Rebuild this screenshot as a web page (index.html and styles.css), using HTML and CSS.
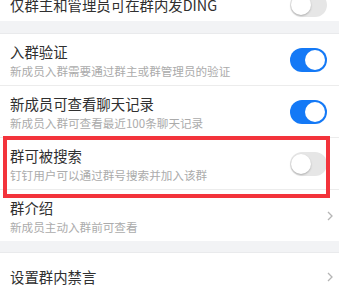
FILE: index.html
```html
<!DOCTYPE html>
<html lang="zh">
<head>
<meta charset="utf-8">
<link rel="stylesheet" href="styles.css">
</head>
<body>
<div class="page">
  <div class="row first">
    <div class="title">仅群主和管理员可在群内发DING</div>
    <span class="toggle off"><span class="knob"></span></span>
  </div>
  <div class="band top"></div>
  <div class="row">
    <div class="text">
      <div class="title">入群验证</div>
      <div class="sub">新成员入群需要通过群主或群管理员的验证</div>
    </div>
    <span class="toggle on"><span class="knob"></span></span>
  </div>
  <div class="divider"></div>
  <div class="row">
    <div class="text">
      <div class="title">新成员可查看聊天记录</div>
      <div class="sub">新成员入群可查看最近100条聊天记录</div>
    </div>
    <span class="toggle on"><span class="knob"></span></span>
  </div>
  <div class="divider"></div>
  <div class="row">
    <div class="text">
      <div class="title">群可被搜索</div>
      <div class="sub">钉钉用户可以通过群号搜索并加入该群</div>
    </div>
    <span class="toggle off"><span class="knob"></span></span>
  </div>
  <div class="divider"></div>
  <div class="row">
    <div class="text">
      <div class="title">群介绍</div>
      <div class="sub">新成员主动入群前可查看</div>
    </div>
    <svg class="chev" width="6" height="10" viewBox="0 0 6 10"><polyline points="1,1 5,5 1,9" fill="none" stroke="#b5b5b5" stroke-width="1.3"/></svg>
  </div>
  <div class="band bottom"></div>
  <div class="row last">
    <div class="title">设置群内禁言</div>
    <svg class="chev" width="6" height="10" viewBox="0 0 6 10"><polyline points="1,1 5,5 1,9" fill="none" stroke="#b5b5b5" stroke-width="1.3"/></svg>
  </div>
</div>
<div class="highlight"></div>
</body>
</html>
```

FILE: styles.css
```css
html, body {
  margin: 0;
  padding: 0;
  background: #ffffff;
  overflow: hidden;
}
body {
  width: 339px;
  height: 286px;
  position: relative;
  font-family: "Noto Sans CJK SC", "Noto Sans", sans-serif;
}
.page {
  display: flex;
  flex-direction: column;
}
.row {
  display: flex;
  align-items: center;
  justify-content: space-between;
  height: 51px;
  box-sizing: border-box;
  padding: 0 12px 0 10px;
}
.row.first {
  height: 32px;
  margin-top: -11px;
}
.row.last {
  height: 46px;
  padding-top: 2px;
}
.row.last .title {
  line-height: 14px;
}
.text {
  display: flex;
  flex-direction: column;
  padding-top: 1px;
}
.title {
  font-size: 14.4px;
  line-height: 20px;
  color: #303030;
}
.sub {
  font-size: 11.6px;
  line-height: 16px;
  color: #ababab;
  margin-top: 1px;
}
.band {
  background: #f2f3f5;
  border-bottom: 1px solid #e9eaec;
  box-sizing: border-box;
}
.band.top { height: 13px; }
.band.bottom { height: 12px; }
.divider {
  height: 1px;
  background: #ececec;
}
.toggle {
  width: 37px;
  height: 24px;
  border-radius: 12px;
  position: relative;
  flex-shrink: 0;
}
.toggle.on { background: #1479f6; }
.toggle.off { background: #e6e6e6; }
.knob {
  position: absolute;
  top: 2px;
  width: 20px;
  height: 20px;
  border-radius: 50%;
  background: #fff;
}
.toggle.on .knob { right: 2px; }
.toggle.off .knob {
  left: 1px;
  box-shadow: 0 1px 2px rgba(0,0,0,0.25);
}
.chev {
  margin-right: -6px;
}
.highlight {
  position: absolute;
  left: 3px;
  top: 136px;
  width: 327px;
  height: 62px;
  box-sizing: border-box;
  border: 4px solid #f3333b;
}
```
